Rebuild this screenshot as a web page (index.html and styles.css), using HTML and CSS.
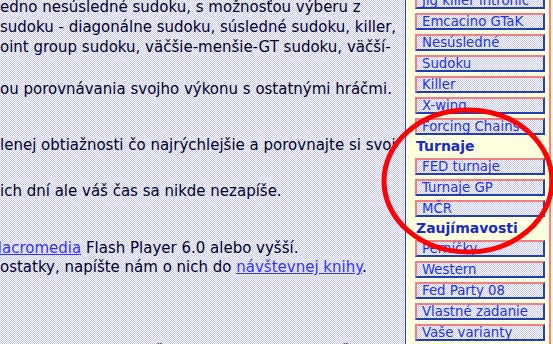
FILE: index.html
```html
<!DOCTYPE html>
<html lang="sk">
<head>
  <meta charset="utf-8">
  <title>Sudoku</title>
  <link rel="stylesheet" href="styles.css">
</head>
<body>
<div class="page">
  <div class="main">
    <p class="txt p1">edno nesúsledné sudoku, s možnosťou výberu z<br>
      sudoku - diagonálne sudoku, súsledné sudoku, killer,<br>
      oint group sudoku, väčšie-menšie-GT sudoku, väčší-</p>
    <p class="txt p2">ou porovnávania svojho výkonu s ostatnými hráčmi.</p>
    <p class="txt p3">lenej obtiažnosti čo najrýchlejšie a porovnajte si svoj</p>
    <p class="txt p4">ich dní ale váš čas sa nikde nezapíše.</p>
    <p class="txt p5"><a href="#" class="cut-m">Macromedia</a> Flash Player 6.0 alebo vyšší.<br>
      ostatky, napíšte nám o nich do <a href="#">návštevnej knihy</a>.</p>
    <p class="txt p6">Hru vytvoril Šmíd ako projekt súťaže Ďuro Kôň Ľubošík</p>
  </div>

  <div class="side">
    <div class="menu">
      <a href="#" class="btn">Jig killer intronic</a>
      <a href="#" class="btn">Emcacino GTaK</a>
      <a href="#" class="btn">Nesúsledné</a>
      <a href="#" class="btn">Sudoku</a>
      <a href="#" class="btn">Killer</a>
      <a href="#" class="btn">X-wing</a>
      <a href="#" class="btn">Forcing Chains</a>
      <div class="head">Turnaje</div>
      <a href="#" class="btn">FED turnaje</a>
      <a href="#" class="btn">Turnaje GP</a>
      <a href="#" class="btn">MČR</a>
      <div class="head">Zaujímavosti</div>
      <a href="#" class="btn">Perníčky</a>
      <a href="#" class="btn">Western</a>
      <a href="#" class="btn">Fed Party 08</a>
      <a href="#" class="btn">Vlastné zadanie</a>
      <a href="#" class="btn">Vaše varianty</a>
    </div>
  </div>
</div>

<!-- hand drawn circle over the menu -->
<svg class="mark" width="553" height="344" viewBox="0 0 553 344">
  <ellipse cx="468" cy="181" rx="84" ry="71" fill="none" stroke="#ff0000" stroke-width="5"/>
</svg>
</body>
</html>
```

FILE: styles.css
```css
body {
     margin: 0;
     height: 344px;
     overflow: hidden;
     font-family: "DejaVu Sans", Verdana, sans-serif;
     background: #ffffe0;
}

.page {
     display: flex;
     height: 344px;
}

.main {
     width: 405px;
     flex-shrink: 0;
     overflow: hidden;
     background: repeating-conic-gradient(#c4c4ff 0 25%, #ffffff 0 50%) 0 0 / 2px 2px;
}

.txt {
     margin: 0;
     font-size: 15px;
     line-height: 20px;
     color: #000022;
     white-space: nowrap;
}

.txt a {
     color: #3333ff;
}

.p1 { margin-top: -3px; }
.p2 { margin-top: 22px; }
.p3 { margin-top: 36px; }
.p4 { margin-top: 26px; }
.p5 { margin-top: 38px; line-height: 19px; }
.p6 { margin-top: 66px; margin-left: 62px; }

.cut-m {
     margin-left: -11px;
}

.side {
     width: 148px;
     flex-shrink: 0;
     box-sizing: border-box;
     border-left: 1px solid #2244ee;
     padding: 0 2px 0 9px;
     background: #ffffe0;
}

.menu {
     display: flex;
     flex-direction: column;
     gap: 4px;
     margin-top: -8px;
     padding-right: 4px;
     border-right: 2px solid #ff8080;
     height: 400px;
}

.btn {
     display: block;
     height: 13px;
     line-height: 14px;
     padding-left: 5px;
     font-size: 13.3px;
     color: #2233dd;
     text-decoration: none;
     white-space: nowrap;
     border: 2px solid;
     border-color: #f08080 #2040b0 #2040b0 #f08080;
     background: repeating-conic-gradient(#c4c4ff 0 25%, #ffffff 0 50%) 0 0 / 2px 2px;
}

.head {
     height: 15px;
     line-height: 15px;
     font-size: 14px;
     font-weight: bold;
     color: #1a2ac8;
     padding-left: 1px;
}

.mark {
     position: absolute;
     left: 0;
     top: 0;
     pointer-events: none;
}
```
